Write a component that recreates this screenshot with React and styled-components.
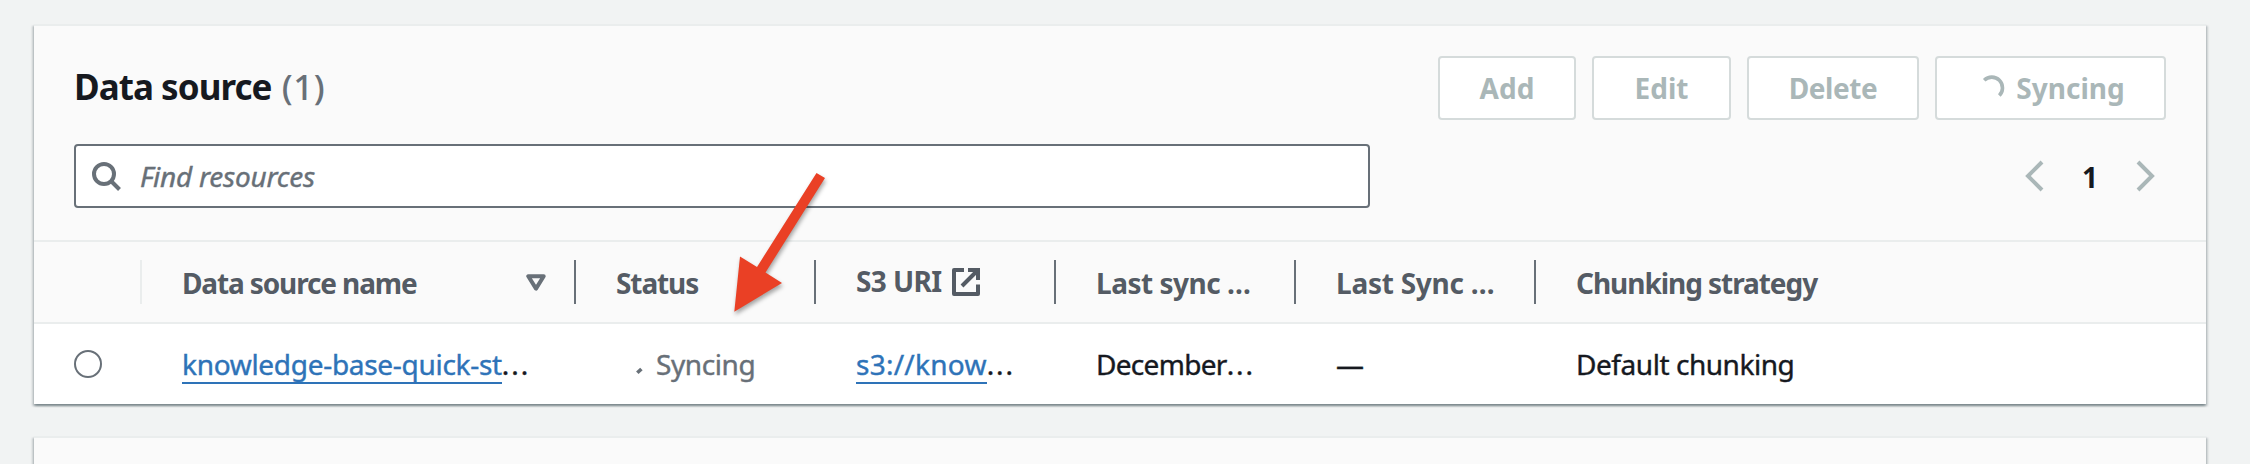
import React from "react";
import styled, { createGlobalStyle } from "styled-components";

const Global = createGlobalStyle`
  * { box-sizing: border-box; }
  body {
    margin: 0;
    background: #f1f3f3;
    color: #16191f;
    font-family: "Noto Sans", "Open Sans", sans-serif;
    font-size: 28px;
    line-height: 40px;
  }
`;

const Page = styled.main`
  position: relative;
  height: 464px;
  overflow: hidden;
  padding: 24px 44px 0 34px;
  display: flex;
  flex-direction: column;
  gap: 32px;
`;

const Card = styled.section`
  flex: none;
  background: #ffffff;
  border-top: 2px solid #eaeded;
  box-shadow: 0 2px 2px 0 rgba(0, 28, 36, 0.3), 2px 2px 2px 0 rgba(0, 28, 36, 0.15),
    -2px 2px 2px 0 rgba(0, 28, 36, 0.15);
`;

const CardHeader = styled.header`
  padding: 30px 40px 32px;
  background: #fafafa;
  border-bottom: 2px solid #eaeded;
  display: flex;
  flex-direction: column;
  gap: 24px;
`;

const NextCardHeader = styled.div`
  height: 60px;
  background: #fafafa;
`;

const Bar = styled.div`
  height: 64px;
  display: flex;
  align-items: center;
  justify-content: space-between;
`;

const Title = styled.h2`
  margin: 0 0 2px;
  font-size: 35px;
  font-weight: 700;
  letter-spacing: -0.95px;
  white-space: pre;
`;

const Count = styled.span`
  margin-left: 2px;
  font-weight: 500;
  color: #687078;
  letter-spacing: 0.6px;
`;

const Actions = styled.div`
  display: flex;
  gap: 16px;
`;

const Button = styled.button`
  width: ${(p) => p.$width}px;
  height: 64px;
  padding: 0;
  display: flex;
  align-items: center;
  justify-content: center;
  gap: 10px;
  background: #ffffff;
  border: 2px solid #d5dbdb;
  border-radius: 4px;
  color: #aab7b8;
  font: inherit;
  font-weight: 700;
  letter-spacing: ${(p) => p.$spacing || 0}px;
`;

const SearchBox = styled.div`
  width: 1296px;
  height: 64px;
  padding-left: 14px;
  display: flex;
  align-items: center;
  gap: 18px;
  background: #ffffff;
  border: 2px solid #687078;
  border-radius: 4px;
`;

const Placeholder = styled.span`
  color: #687078;
  font-style: italic;
  letter-spacing: -0.25px;
  -webkit-text-stroke: 0.4px currentColor;
`;

const Pager = styled.nav`
  padding: 0 8px;
  display: flex;
  align-items: center;
  gap: 32px;
`;

const PageNumber = styled.span`
  width: 22px;
  padding-top: 1px;
  text-align: center;
  font-weight: 700;
`;

const Row = styled.div`
  height: ${(p) => (p.$head ? 82 : 80)}px;
  display: grid;
  grid-template-columns: 108px 434px repeat(4, 240px) 1fr;
  align-items: center;
  background: ${(p) => (p.$head ? "#fafafa" : "#ffffff")};
  border-bottom: ${(p) => (p.$head ? "2px solid #eaeded" : "0")};
`;

const HeadCell = styled.div`
  height: 44px;
  padding: 1px 28px 0 40px;
  display: flex;
  align-items: center;
  justify-content: space-between;
  color: #545b64;
  font-weight: 700;
  white-space: pre;
  letter-spacing: ${(p) => p.$spacing || 0}px;
  border-right: ${(p) => (p.$divider ? `2px solid ${p.$divider}` : "0")};
`;

const ExternalLabel = styled.span`
  display: flex;
  align-items: center;
  gap: 10px;
  padding-bottom: 4px;

  svg {
    position: relative;
    top: 1px;
  }
`;

const Cell = styled.div`
  padding-left: 40px;
  display: flex;
  align-items: center;
  white-space: pre;
  letter-spacing: ${(p) => p.$spacing || 0}px;
  -webkit-text-stroke: 0.4px currentColor;
`;

const Link = styled.a`
  height: 40px;
  color: #2e73b8;
  border-bottom: 2px solid #2e73b8;
`;

const Dots = styled.span`
  letter-spacing: 1.9px;
`;

const Radio = styled.span`
  width: 28px;
  height: 28px;
  border: 2px solid #687078;
  border-radius: 50%;
  background: #ffffff;
`;

const Progress = styled.span`
  display: flex;
  align-items: center;
  gap: 6px;
  padding-left: 10px;
  color: #687078;
`;

const Pointer = styled.svg`
  position: absolute;
  left: 720px;
  top: 160px;
  filter: drop-shadow(1px 3px 2px rgba(0, 0, 0, 0.35));
`;

const SearchIcon = () => (
  <svg width="32" height="32" viewBox="0 0 32 32" fill="none" stroke="#687078" strokeWidth="4">
    <circle cx="14" cy="14" r="10" />
    <path d="M21 21l8.5 8.5" />
  </svg>
);

const Chevron = ({ next }) => (
  <svg width="25" height="32" viewBox="0 0 25 32" fill="none" stroke="#aab7b8" strokeWidth="4">
    <path d={next ? "M5 2l14 14-14 14" : "M20 2L6 16l14 14"} />
  </svg>
);

const Spinner = () => (
  <svg width="30" height="32" viewBox="0 0 30 32" fill="none" stroke="#aab7b8" strokeWidth="3.6">
    <path d="M8.2 8.2A10.2 10.2 0 0 1 23.3 23.5" />
  </svg>
);

const SortIcon = () => (
  <svg width="20" height="18" viewBox="0 0 20 18" fill="none" stroke="#687078" strokeWidth="4" strokeLinejoin="round">
    <path d="M2.3 2.3h15.4L10 14.6z" />
  </svg>
);

const ExternalIcon = () => (
  <svg width="28" height="28" viewBox="0 0 28 28" fill="none" stroke="#545b64" strokeWidth="4">
    <path d="M12 2H2v24h24V16.5" strokeLinejoin="round" />
    <path d="M16 2h10v10M26 2L10 18" />
  </svg>
);

const StatusSpinner = () => (
  <svg width="24" height="32" viewBox="0 0 24 32" fill="none" stroke="#687078" strokeWidth="3.6">
    <path d="M11.3 24.8l4.1-3.8" />
  </svg>
);

const divider = "#687078";

export default function App() {
  return (
    <Page>
      <Global />
      <Card>
        <CardHeader>
          <Bar>
            <Title>
              Data source <Count>(1)</Count>
            </Title>
            <Actions>
              <Button $width={138}>Add</Button>
              <Button $width={139}>Edit</Button>
              <Button $width={172} $spacing={-0.4}>Delete</Button>
              <Button $width={231}>
                <Spinner />
                Syncing
              </Button>
            </Actions>
          </Bar>
          <Bar>
            <SearchBox>
              <SearchIcon />
              <Placeholder>Find resources</Placeholder>
            </SearchBox>
            <Pager>
              <Chevron />
              <PageNumber>1</PageNumber>
              <Chevron next />
            </Pager>
          </Bar>
        </CardHeader>
        <Row $head>
          <HeadCell $divider="#eaeded" />
          <HeadCell $divider={divider} $spacing={-1.13}>
            Data source name
            <SortIcon />
          </HeadCell>
          <HeadCell $divider={divider} $spacing={-1.1}>Status</HeadCell>
          <HeadCell $divider={divider} $spacing={-0.6}>
            <ExternalLabel>
              S3 URI
              <ExternalIcon />
            </ExternalLabel>
          </HeadCell>
          <HeadCell $divider={divider} $spacing={-0.5}>Last sync …</HeadCell>
          <HeadCell $divider={divider} $spacing={-0.25}>Last Sync …</HeadCell>
          <HeadCell $spacing={-1.05}>Chunking strategy</HeadCell>
        </Row>
        <Row>
          <Cell>
            <Radio />
          </Cell>
          <Cell $spacing={-0.3}>
            <Link>knowledge-base-quick-st</Link>
            <Dots>...</Dots>
          </Cell>
          <Cell $spacing={-0.4}>
            <Progress>
              <StatusSpinner />
              Syncing
            </Progress>
          </Cell>
          <Cell $spacing={0.25}>
            <Link>s3://know</Link>
            <Dots>...</Dots>
          </Cell>
          <Cell $spacing={-0.7}>
            December
            <Dots>...</Dots>
          </Cell>
          <Cell>—</Cell>
          <Cell $spacing={-0.45}>Default chunking</Cell>
        </Row>
      </Card>
      <Card>
        <NextCardHeader />
      </Card>
      <Pointer width="120" height="170" viewBox="720 160 120 170">
        <path d="M734.3 311.7L740 256.5L757 267L816.5 173L825 178L765.5 272.5L782 283Z" fill="#ea4025" />
      </Pointer>
    </Page>
  );
}
